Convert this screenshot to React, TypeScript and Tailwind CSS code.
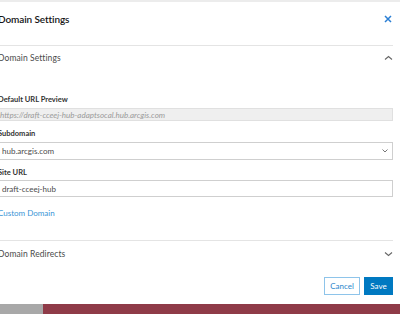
import React from 'react';

const font = { fontFamily: 'Lato, "Open Sans", sans-serif' };

const ChevronUp = () => (
  <svg width="9" height="6" viewBox="0 0 9 6" fill="none">
    <path d="M1 4.5 L4.5 1.5 L8 4.5" stroke="#666" strokeWidth="1.1" />
  </svg>
);

const ChevronDown = () => (
  <svg width="9" height="6" viewBox="0 0 9 6" fill="none">
    <path d="M1 1.5 L4.5 4.5 L8 1.5" stroke="#666" strokeWidth="1.1" />
  </svg>
);

export default function App() {
  return (
    <div className="w-[400px] h-[314px] overflow-hidden bg-white flex flex-col" style={font}>
      {/* faint strip of the page behind */}
      <div className="h-[2px] bg-[#ececec] shrink-0" />

      <div className="flex flex-col ml-[-2px] w-[395px] shrink-0">
        {/* Modal header */}
        <div className="h-[43px] flex items-start justify-between pt-[10px]">
          <span className="text-[10px] leading-[14px] font-semibold text-[#151515] tracking-[-0.01em]">Domain Settings</span>
          <svg width="8" height="8" viewBox="0 0 8 8" className="mt-[3px] mr-[1px]">
            <path d="M1 1 L7 7 M7 1 L1 7" stroke="#2b7fd4" strokeWidth="1.5" />
          </svg>
        </div>
        <div className="h-px bg-[#e4e4e4]" />

        {/* Accordion: Domain Settings */}
        <div className="h-[24px] flex items-center justify-between">
          <span className="text-[8.5px] text-[#4a4a4a] tracking-[0.01em]">Domain Settings</span>
          <ChevronUp />
        </div>

        <div className="flex flex-col pt-[24px]">
          <label className="text-[7.5px] leading-[12px] font-bold text-[#323232]">Default URL Preview</label>
          <div className="mt-[2px] h-[13px] bg-[#efefef] border border-[#e0e0e0] flex items-center pl-[1px]">
            <span className="text-[8px] italic text-[#9a9a9a]">https://draft-cceej-hub-adaptsocal.hub.arcgis.com</span>
          </div>

          <label className="mt-[7px] text-[7.5px] leading-[12px] font-bold text-[#323232]">Subdomain</label>
          <div className="mt-[2px] h-[18px] border border-[#cfcfcf] flex items-center justify-between pl-[3px] pr-[4px]">
            <span className="text-[8px] text-[#4a4a4a]">hub.arcgis.com</span>
            <svg width="6" height="4" viewBox="0 0 6 4" fill="none">
              <path d="M0.5 0.5 L3 3 L5.5 0.5" stroke="#777" strokeWidth="1" />
            </svg>
          </div>

          <label className="mt-[7px] text-[7.5px] leading-[12px] font-bold text-[#323232]">Site URL</label>
          <div className="mt-[1px] h-[17px] border border-[#cfcfcf] flex items-center pl-[3px]">
            <span className="text-[8px] text-[#4a4a4a]">draft-cceej-hub</span>
          </div>

          <a className="mt-[10px] h-[12px] leading-[12px] text-[8px] text-[#3a95d6]">Custom Domain</a>
        </div>

        <div className="mt-[21px] h-px bg-[#e4e4e4]" />

        {/* Accordion: Domain Redirects */}
        <div className="h-[26px] flex items-center justify-between">
          <span className="text-[8.5px] text-[#4a4a4a] tracking-[0.01em]">Domain Redirects</span>
          <ChevronDown />
        </div>

        {/* Footer buttons */}
        <div className="mt-[10px] flex justify-end gap-[4px]">
          <button className="h-[18px] w-[36px] border border-[#8ec4ea] text-[8px] text-[#2a86cc] bg-white">Cancel</button>
          <button className="h-[18px] w-[29px] bg-[#0079c1] text-[8px] text-white">Save</button>
        </div>
      </div>

      <div className="mt-[9px] flex flex-1">
        <div className="w-[43px] bg-[#a8a8a8]" />
        <div className="flex-1 bg-[#8f3b48]" />
      </div>
    </div>
  );
}
